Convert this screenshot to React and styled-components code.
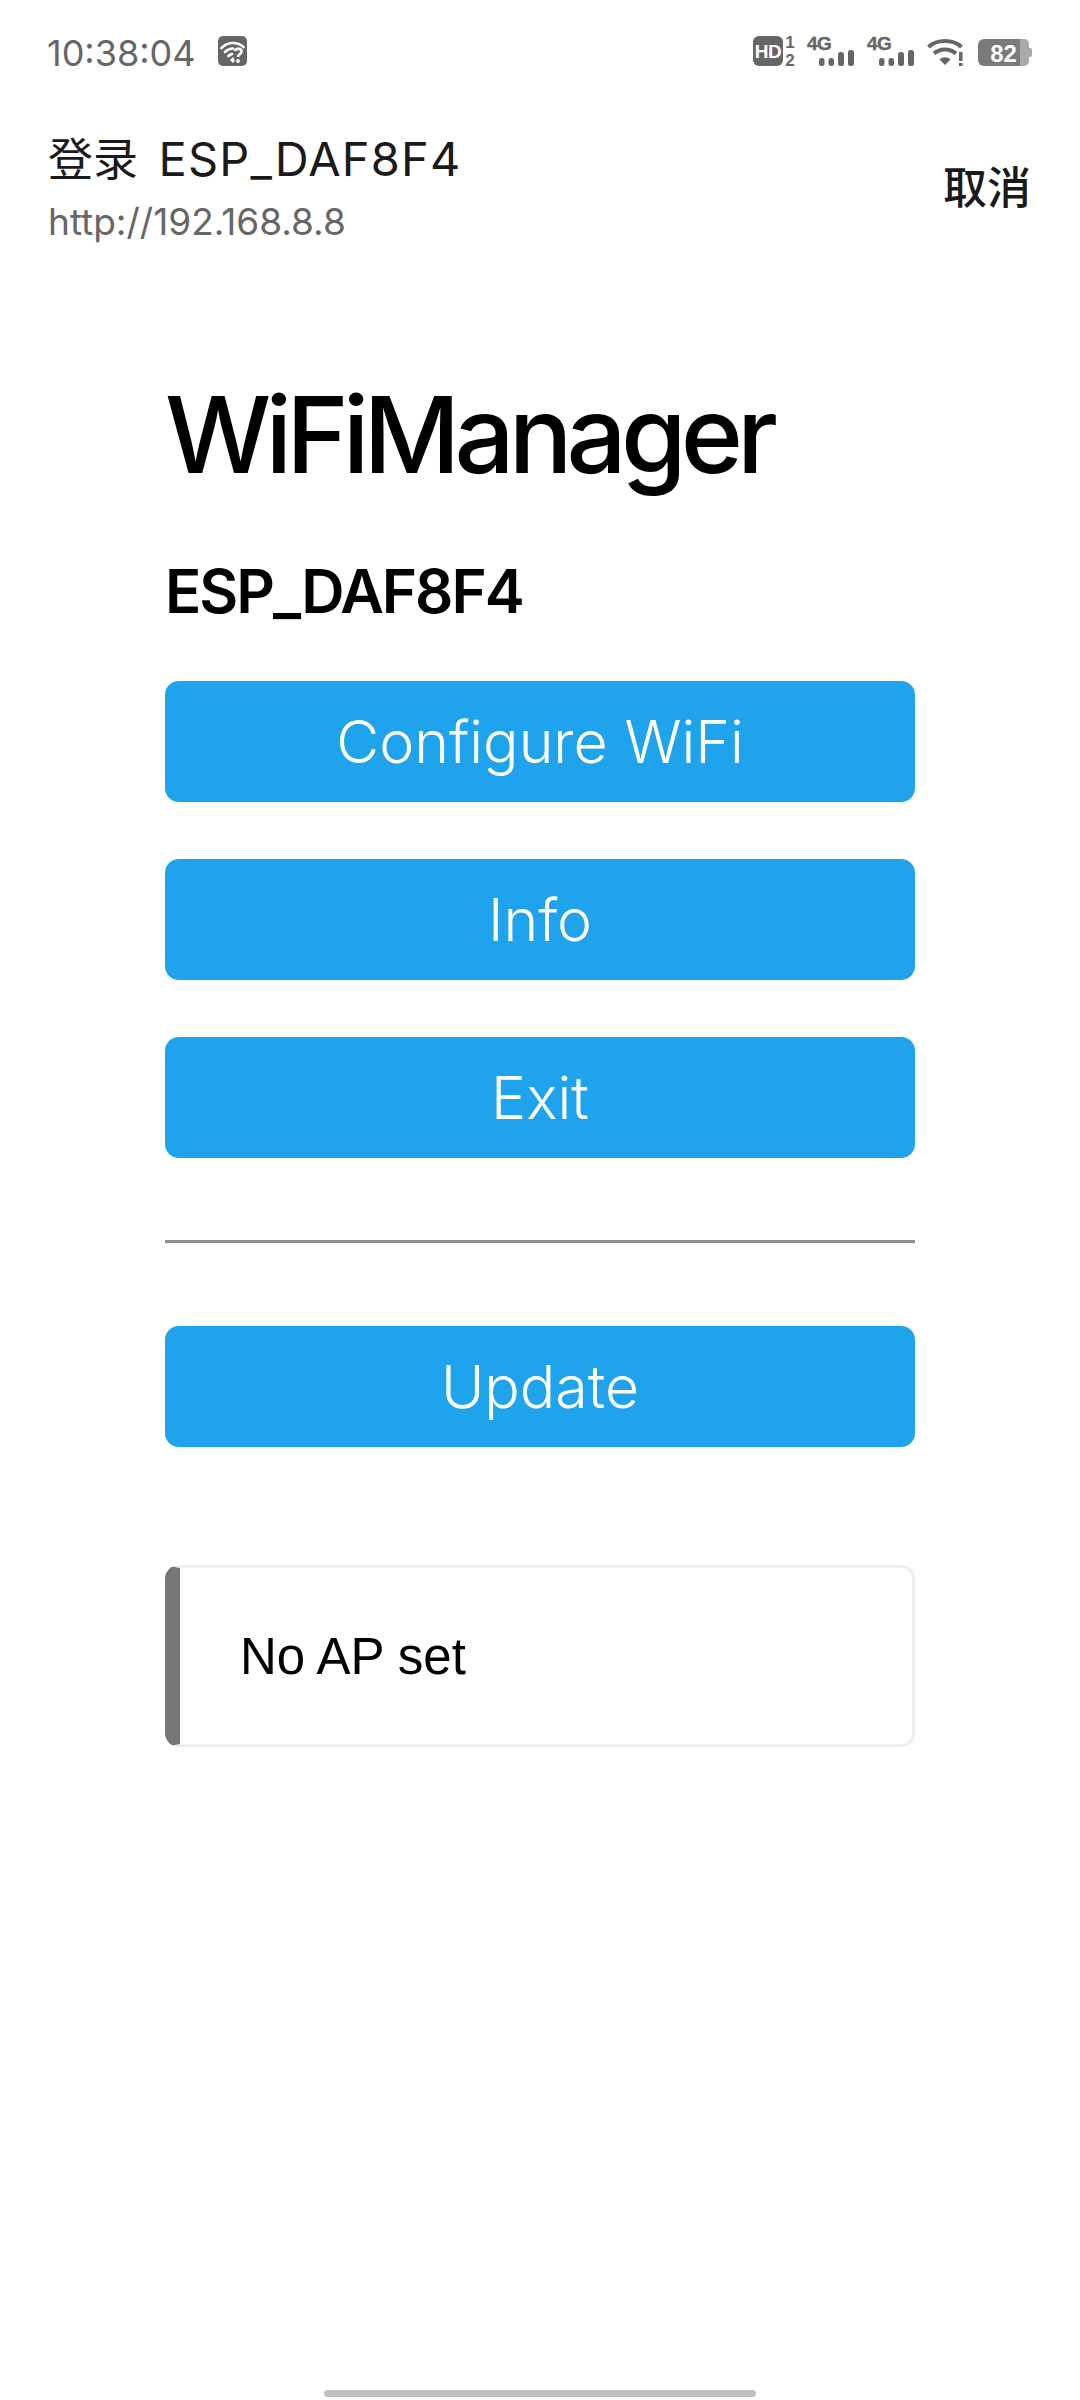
import React from "react";
import styled, { createGlobalStyle } from "styled-components";

const GlobalStyle = createGlobalStyle`
  html, body {
    margin: 0;
    padding: 0;
    background: #fff;
  }
  * {
    box-sizing: border-box;
  }
`;

const Page = styled.div`
  position: relative;
  width: 1080px;
  height: 2400px;
  overflow: hidden;
  background: #fff;
  font-family: Inter, "Noto Sans CJK SC", sans-serif;
`;

const StatusBar = styled.div`
  display: flex;
  align-items: center;
  justify-content: space-between;
  height: 30px;
  margin-top: 36px;
  padding: 0 48px 0 47px;
`;

const StatusLeft = styled.div`
  display: flex;
  align-items: center;
  gap: 22px;
`;

const Clock = styled.span`
  font-size: 36px;
  line-height: 32px;
  padding-top: 4px;
  color: #666;
`;

const StatusIcons = styled.div`
  display: flex;
  align-items: flex-end;
`;

const Glyph = styled.svg`
  display: block;
  flex: none;
  overflow: visible;
  margin-left: ${({ $gap }) => $gap || 0}px;
`;

const NavBar = styled.div`
  display: flex;
  align-items: center;
  justify-content: space-between;
  margin-top: 66px;
  padding: 0 49px 0 48px;
`;

const NavTitle = styled.div`
  display: flex;
  flex-direction: column;
`;

const SiteName = styled.div`
  font-size: 47px;
  line-height: 54px;
  color: #1a1a1a;
  word-spacing: 6px;
  letter-spacing: 1.2px;
`;

const SiteNameCjk = styled.span`
  font-size: 45px;
  letter-spacing: 0;
`;

const SiteUrl = styled.div`
  font-size: 37px;
  line-height: 46px;
  margin-top: 12px;
  color: #666;
`;

const CancelLink = styled.a`
  font-family: "Noto Sans CJK SC", sans-serif;
  font-size: 44px;
  font-weight: 500;
  line-height: 56px;
  padding-bottom: 8px;
  color: #1a1a1a;
`;

const Content = styled.main`
  display: flex;
  flex-direction: column;
  width: 750px;
  margin-left: 165px;
`;

const Heading = styled.h1`
  margin: 129px 0 0;
  font-size: 106px;
  font-weight: 530;
  line-height: 122px;
  letter-spacing: -5.9px;
  color: #000;
`;

const SubHeading = styled.h3`
  margin: 60px 0 0;
  font-size: 60px;
  font-weight: 600;
  line-height: 70px;
  letter-spacing: -2px;
  color: #000;
`;

const Menu = styled.div`
  display: flex;
  flex-direction: column;
  margin-top: ${({ $top }) => $top}px;
  gap: 57px;
`;

const MenuButton = styled.button`
  display: block;
  width: 100%;
  height: 121px;
  padding: 0;
  border: 0;
  border-radius: 14px;
  background: #1fa3ec;
  color: #fff;
  font-family: Inter, sans-serif;
  font-size: 59px;
  font-weight: 350;
  line-height: 121px;
  text-align: center;
`;

const Divider = styled.hr`
  height: 4px;
  margin: 82px 0 0;
  border: 0;
  border-top: 3px solid #8e8e8e;
  border-bottom: 1px solid #eee;
`;

const Message = styled.div`
  display: flex;
  align-items: center;
  height: 182px;
  margin-top: 118px;
  padding-left: 60px;
  border: 3px solid #eee;
  border-left: 15px solid #777;
  border-radius: 14px;
  font-family: "Liberation Sans", sans-serif;
  font-size: 51px;
  color: #000;
`;

const HomeIndicator = styled.div`
  position: absolute;
  left: 324px;
  bottom: 3px;
  width: 432px;
  height: 7px;
  border-radius: 4px;
  background: #c0c0c0;
`;

const WifiQuestionIcon = () => (
  <Glyph width="30" height="30" viewBox="0 0 30 30">
    <rect width="29" height="30" rx="5" fill="#666" />
    <g fill="none" stroke="#fff" strokeWidth="2.6" strokeLinecap="round">
      <path d="M3.500 12C9.500 5.500 19.500 5.500 25.500 11" />
      <path d="M7 16C9.500 13.500 12 12.500 15 12.500" />
      <path d="M10.500 20C11.500 19 12.500 18.500 14 18" />
    </g>
    <path d="M12 24l3-3 2 3.500-2 2.500z" fill="#fff" />
    <path
      d="M17 15C17.500 12 23.500 12 23.500 15.500C23.500 18 20.500 18 20 21"
      fill="none"
      stroke="#fff"
      strokeWidth="2.8"
    />
    <circle cx="20" cy="25" r="1.9" fill="#fff" />
  </Glyph>
);

const HdIcon = () => (
  <Glyph width="42" height="30" viewBox="0 0 42 30">
    <rect width="30" height="30" rx="6" fill="#666" />
    <text x="15" y="21.500" textAnchor="middle" fontFamily="Liberation Sans" fontSize="19" fontWeight="700" fill="#fff" letterSpacing="-0.5">HD</text>
    <text x="37" y="12" textAnchor="middle" fontFamily="Liberation Sans" fontSize="17" fontWeight="700" fill="#666">1</text>
    <text x="37" y="30" textAnchor="middle" fontFamily="Liberation Sans" fontSize="17" fontWeight="700" fill="#666">2</text>
  </Glyph>
);

const SignalIcon = ({ gap }) => (
  <Glyph $gap={gap} width="47" height="30" viewBox="0 0 47 30">
    <text x="0" y="14" fontFamily="Liberation Sans" fontSize="19" fontWeight="700" fill="#666" stroke="#666" strokeWidth="0.4" letterSpacing="-0.5">4G</text>
    <rect x="12" y="22" width="5.500" height="8" rx="2.500" fill="#666" />
    <rect x="21.500" y="22" width="5.500" height="8" rx="2.500" fill="#666" />
    <rect x="31" y="16" width="6" height="14" rx="2.500" fill="#666" />
    <rect x="41" y="14" width="6" height="16" rx="2.500" fill="#666" />
  </Glyph>
);

const WifiAlertIcon = () => (
  <Glyph $gap={13} width="36" height="28" viewBox="0 0 36 28">
    <g fill="none" stroke="#666" strokeWidth="4">
      <path d="M1.500 9C10 1 26 1 34.500 9" />
      <path d="M7 15.500C13 10 23 10 29 15.500" />
    </g>
    <path d="M12.500 21.500C16 18.500 20 18.500 23.500 21.500L18 27z" fill="#666" />
    <rect x="32" y="14" width="3.500" height="9" fill="#666" />
    <rect x="32" y="25" width="3.500" height="3" fill="#666" />
  </Glyph>
);

const BatteryIcon = () => (
  <Glyph $gap={15} width="54" height="27" viewBox="0 0 54 27">
    <path d="M6 0H42V27H6A6 6 0 0 1 0 21V6A6 6 0 0 1 6 0Z" fill="#7a7a7a" />
    <path d="M42 0H46A5 5 0 0 1 51 5V22A5 5 0 0 1 46 27H42Z" fill="#aaa" />
    <path d="M51 9H52A2 2 0 0 1 54 11V16A2 2 0 0 1 52 18H51Z" fill="#aaa" />
    <text x="25.500" y="22.500" textAnchor="middle" fontFamily="Liberation Sans" fontSize="24" fontWeight="700" fill="#fff">82</text>
  </Glyph>
);

const App = () => {
  return (
    <Page>
      <GlobalStyle />
      <StatusBar>
        <StatusLeft>
          <Clock>10:38:04</Clock>
          <WifiQuestionIcon />
        </StatusLeft>
        <StatusIcons>
          <HdIcon />
          <SignalIcon gap={12} />
          <SignalIcon gap={13} />
          <WifiAlertIcon />
          <BatteryIcon />
        </StatusIcons>
      </StatusBar>

      <NavBar>
        <NavTitle>
          <SiteName><SiteNameCjk>登录</SiteNameCjk> ESP_DAF8F4</SiteName>
          <SiteUrl>http://192.168.8.8</SiteUrl>
        </NavTitle>
        <CancelLink>取消</CancelLink>
      </NavBar>

      <Content>
        <Heading>WiFiManager</Heading>
        <SubHeading>ESP_DAF8F4</SubHeading>
        <Menu $top={55}>
          <MenuButton>Configure WiFi</MenuButton>
          <MenuButton>Info</MenuButton>
          <MenuButton>Exit</MenuButton>
        </Menu>
        <Divider />
        <Menu $top={82}>
          <MenuButton>Update</MenuButton>
        </Menu>
        <Message>No AP set</Message>
      </Content>

      <HomeIndicator />
    </Page>
  );
};

export default App;
